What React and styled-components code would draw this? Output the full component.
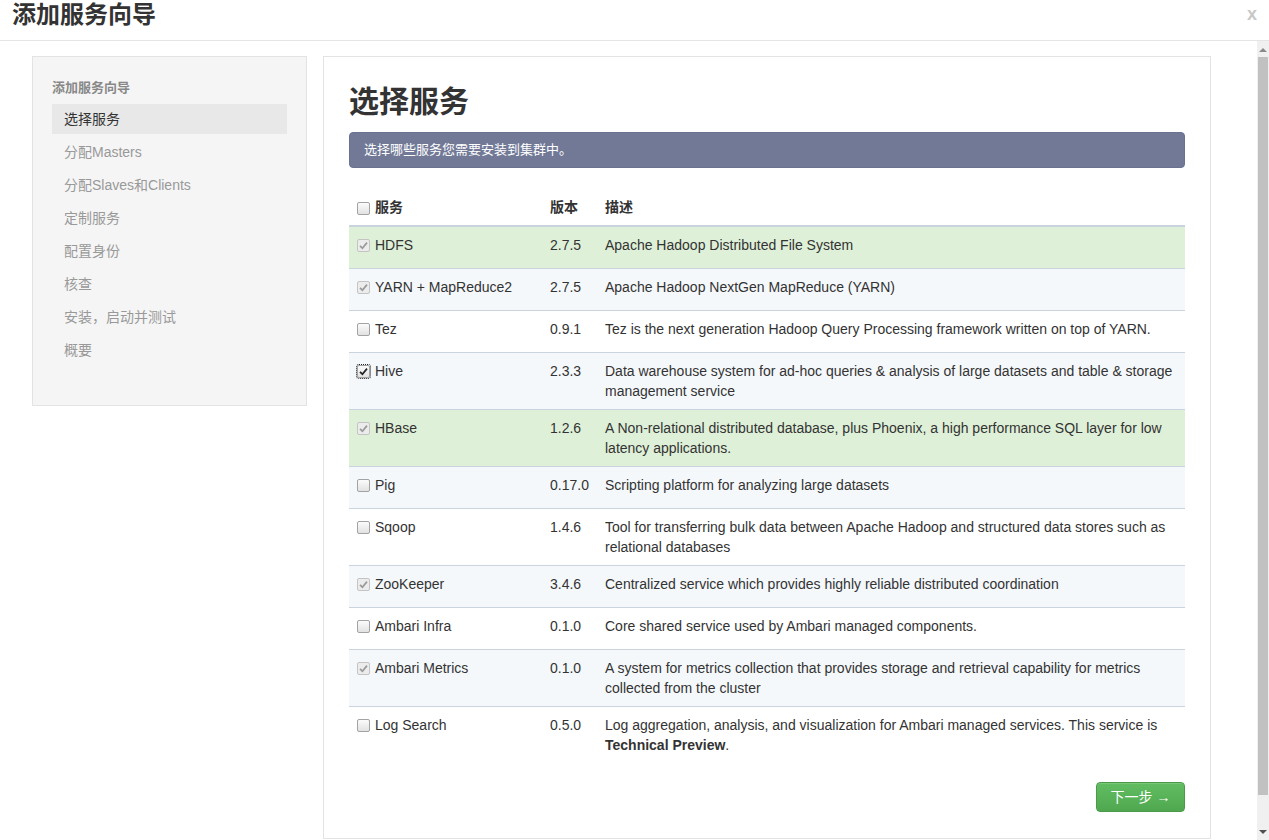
import styled, { createGlobalStyle } from 'styled-components';

const GlobalStyle = createGlobalStyle`
  html, body {
    margin: 0;
    padding: 0;
    height: 100%;
    overflow: hidden;
    background: #fff;
  }
  body {
    font-family: 'Liberation Sans', 'Noto Sans CJK SC', Arial, sans-serif;
    font-size: 14px;
    color: #333;
  }
  * {
    box-sizing: border-box;
  }
`;

const Page = styled.div`
  display: flex;
  flex-direction: column;
  height: 840px;
`;

const Header = styled.div`
  display: flex;
  justify-content: space-between;
  align-items: flex-start;
  height: 41px;
  padding: 0 12px;
  border-bottom: 1px solid #e5e5e5;
  flex-shrink: 0;
`;

const HeaderTitle = styled.h3`
  margin: 0;
  font-size: 24px;
  line-height: 30px;
  font-weight: bold;
  color: #333;
`;

const Close = styled.span`
  font-family: 'Liberation Sans', Arial, sans-serif;
  font-size: 18px;
  line-height: 28px;
  font-weight: bold;
  color: #c8c8c8;
`;

const Body = styled.div`
  flex: 1;
  display: flex;
  min-height: 0;
`;

const Viewport = styled.div`
  flex: 1;
  overflow: hidden;
`;

const ScrollTrack = styled.div`
  width: 12px;
  flex-shrink: 0;
  display: flex;
  flex-direction: column;
  background: #f0f0f0;
`;

const ScrollArrow = styled.div`
  height: 16px;
  display: flex;
  align-items: center;
  justify-content: center;
  flex-shrink: 0;
`;

const ScrollThumb = styled.div`
  height: 738px;
  margin: 0 1px;
  background: #c1c1c1;
`;

const Layout = styled.div`
  display: grid;
  grid-template-columns: 275px 1fr;
  gap: 16px;
  align-items: start;
  padding: 15px 46px 30px 32px;
`;

const Sidebar = styled.div`
  background: #f5f5f5;
  border: 1px solid #e3e3e3;
  padding: 23px 19px 37px 19px;
`;

const SideHeading = styled.div`
  font-size: 13px;
  line-height: 16px;
  font-weight: bold;
  color: #888;
  margin-bottom: 8px;
`;

const SideItem = styled.div`
  height: 30px;
  line-height: 30px;
  padding: 0 12px;
  margin-bottom: 3px;
  color: ${({ $active }) => ($active ? '#333' : '#999')};
  background: ${({ $active }) => ($active ? '#e8e8e8' : 'transparent')};
`;

const Panel = styled.div`
  border: 1px solid #e3e3e3;
  background: #fff;
  padding: 27px 25px 26px 25px;
`;

const Title = styled.h2`
  margin: 0 0 12px;
  font-size: 30px;
  line-height: 36px;
  font-weight: bold;
  color: #333;
`;

const Alert = styled.div`
  background: #717996;
  border: 1px solid #6a7290;
  border-radius: 4px;
  color: #fff;
  font-size: 13px;
  line-height: 20px;
  padding: 7px 14px;
`;

const Table = styled.table`
  width: 100%;
  margin-top: 21px;
  border-collapse: collapse;
  table-layout: fixed;
`;

const HeadCell = styled.th`
  text-align: left;
  font-weight: bold;
  padding: 8px;
  line-height: 20px;
  border-bottom: 2px solid #c9d4df;
  vertical-align: bottom;
`;

const Row = styled.tr`
  background: ${({ $tone }) =>
    $tone === 'success' ? '#dff0d8' : $tone === 'striped' ? '#f5f8fb' : '#fff'};
  border-bottom: 1px solid #c9d4df;

  &:last-child {
    border-bottom: none;
  }
`;

const Cell = styled.td`
  padding: 8px;
  line-height: 20px;
  vertical-align: top;
`;

const NameLine = styled.label`
  display: flex;
  align-items: flex-start;
  gap: 5px;
  min-height: ${({ $tall }) => ($tall ? '25px' : '20px')};
  font-weight: ${({ $bold }) => ($bold ? 'bold' : 'normal')};
`;

const CheckBox = styled.span`
  display: inline-flex;
  align-items: center;
  justify-content: center;
  width: 13px;
  height: 13px;
  margin-top: ${({ $head }) => ($head ? '5px' : '4px')};
  border: 1px solid ${({ $disabled }) => ($disabled ? '#c4c4c4' : '#a3a3a3')};
  border-radius: 2px;
  background: ${({ $disabled }) =>
    $disabled ? '#ececec' : 'linear-gradient(#fbfbfb, #e2e2e2)'};
  outline: ${({ $focused }) => ($focused ? '1px dotted #222' : 'none')};
  flex-shrink: 0;
`;

const Footer = styled.div`
  display: flex;
  justify-content: flex-end;
  margin-top: 19px;
`;

const NextButton = styled.button`
  font-family: 'Liberation Sans', 'Noto Sans CJK SC', Arial, sans-serif;
  font-size: 14px;
  line-height: 20px;
  color: #fff;
  width: 89px;
  height: 30px;
  padding: 0;
  border: 1px solid #4a9a4a;
  border-radius: 4px;
  background: linear-gradient(#62bd62, #4fa84f);
  box-shadow: inset 0 1px 0 rgba(255, 255, 255, 0.15);
  cursor: pointer;
`;

const Check = ({ checked, disabled, focused, head }) => (
  <CheckBox $disabled={disabled} $focused={focused} $head={head}>
    {checked && (
      <svg width="11" height="11" viewBox="0 0 11 11">
        <path
          d="M2 5.8 L4.4 8.2 L9 2.6"
          fill="none"
          stroke={disabled ? '#9a9a9a' : '#222'}
          strokeWidth="1.7"
        />
      </svg>
    )}
  </CheckBox>
);

const STEPS = [
  '选择服务',
  '分配Masters',
  '分配Slaves和Clients',
  '定制服务',
  '配置身份',
  '核查',
  '安装，启动并测试',
  '概要',
];

const SERVICES = [
  { name: 'HDFS', version: '2.7.5', desc: 'Apache Hadoop Distributed File System', checked: true, disabled: true, success: true },
  { name: 'YARN + MapReduce2', version: '2.7.5', desc: 'Apache Hadoop NextGen MapReduce (YARN)', checked: true, disabled: true },
  { name: 'Tez', version: '0.9.1', desc: 'Tez is the next generation Hadoop Query Processing framework written on top of YARN.' },
  { name: 'Hive', version: '2.3.3', desc: 'Data warehouse system for ad-hoc queries & analysis of large datasets and table & storage management service', checked: true, focused: true },
  { name: 'HBase', version: '1.2.6', desc: 'A Non-relational distributed database, plus Phoenix, a high performance SQL layer for low latency applications.', checked: true, disabled: true, success: true },
  { name: 'Pig', version: '0.17.0', desc: 'Scripting platform for analyzing large datasets' },
  { name: 'Sqoop', version: '1.4.6', desc: 'Tool for transferring bulk data between Apache Hadoop and structured data stores such as relational databases' },
  { name: 'ZooKeeper', version: '3.4.6', desc: 'Centralized service which provides highly reliable distributed coordination', checked: true, disabled: true },
  { name: 'Ambari Infra', version: '0.1.0', desc: 'Core shared service used by Ambari managed components.' },
  { name: 'Ambari Metrics', version: '0.1.0', desc: 'A system for metrics collection that provides storage and retrieval capability for metrics collected from the cluster', checked: true, disabled: true },
  {
    name: 'Log Search',
    version: '0.5.0',
    desc: (
      <>
        Log aggregation, analysis, and visualization for Ambari managed services. This service is{' '}
        <b>Technical Preview</b>.
      </>
    ),
  },
];

const App = () => {
  return (
    <Page>
      <GlobalStyle />
      <Header>
        <HeaderTitle>添加服务向导</HeaderTitle>
        <Close>x</Close>
      </Header>
      <Body>
        <Viewport>
          <Layout>
            <Sidebar>
              <SideHeading>添加服务向导</SideHeading>
              {STEPS.map((step, i) => (
                <SideItem key={step} $active={i === 0}>
                  {step}
                </SideItem>
              ))}
            </Sidebar>
            <Panel>
              <Title>选择服务</Title>
              <Alert>选择哪些服务您需要安装到集群中。</Alert>
              <Table>
                <colgroup>
                  <col style={{ width: 193 }} />
                  <col style={{ width: 55 }} />
                  <col />
                </colgroup>
                <thead>
                  <tr>
                    <HeadCell>
                      <NameLine $bold>
                        <Check head />
                        服务
                      </NameLine>
                    </HeadCell>
                    <HeadCell>版本</HeadCell>
                    <HeadCell>描述</HeadCell>
                  </tr>
                </thead>
                <tbody>
                  {SERVICES.map((s, i) => (
                    <Row key={s.name} $tone={s.success ? 'success' : i % 2 === 1 ? 'striped' : 'plain'}>
                      <Cell>
                        <NameLine $tall>
                          <Check checked={s.checked} disabled={s.disabled} focused={s.focused} />
                          {s.name}
                        </NameLine>
                      </Cell>
                      <Cell>{s.version}</Cell>
                      <Cell>{s.desc}</Cell>
                    </Row>
                  ))}
                </tbody>
              </Table>
              <Footer>
                <NextButton>下一步 →</NextButton>
              </Footer>
            </Panel>
          </Layout>
        </Viewport>
        <ScrollTrack>
          <ScrollArrow>
            <svg width="8" height="5" viewBox="0 0 8 5">
              <path d="M0 5 L4 1 L8 5 Z" fill="#8a8a8a" />
            </svg>
          </ScrollArrow>
          <ScrollThumb />
          <div style={{ flex: 1 }} />
          <ScrollArrow>
            <svg width="8" height="5" viewBox="0 0 8 5">
              <path d="M0 0 L8 0 L4 4 Z" fill="#505050" />
            </svg>
          </ScrollArrow>
        </ScrollTrack>
      </Body>
    </Page>
  );
};

export default App;
